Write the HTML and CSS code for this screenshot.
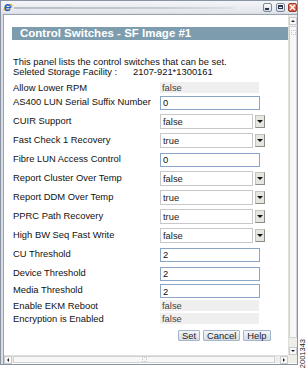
FILE: index.html
```html
<!DOCTYPE html>
<html lang="en">
<head>
    <meta charset="UTF-8">
    <title>Control Switches - SF Image #1</title>
    <link rel="stylesheet" href="styles.css">
</head>
<body>
    <div class="shot">
        <!-- Browser popup window -->
        <div class="window">
            <div class="titlebar">
                <svg class="ie-icon" width="10" height="10" viewBox="0 0 10 10">
                    <ellipse cx="5" cy="5.5" rx="4.6" ry="1.8" fill="none" stroke="#e8a020" stroke-width="1" transform="rotate(-30 5 5.5)"/>
                    <path d="M2.2 5.6h5.2c0-1.7-1.1-2.9-2.6-2.9S2.2 3.9 2.2 5.6s1.1 2.9 2.6 2.9c1.1 0 1.9-.5 2.3-1.3" fill="none" stroke="#1d62c8" stroke-width="1.4"/>
                </svg>
                <span class="title-blur"></span>
                <span class="win-btn win-min"></span>
                <span class="win-btn win-max"></span>
                <span class="win-btn win-close">
                    <svg width="7" height="7" viewBox="0 0 7 7"><path d="M1 1l5 5M6 1L1 6" stroke="#fff" stroke-width="1.4"/></svg>
                </span>
            </div>

            <div class="frame">
                <div class="client">
                    <div class="viewport">
                        <div class="panel">
                            <h1 class="panel-title">Control Switches - SF Image #1</h1>
                            <p class="intro">This panel lists the control switches that can be set.</p>
                            <p class="facility"><span class="facility-label">Seleted Storage Facility :</span><span>2107-921*1300161</span></p>

                            <div class="row row-ro row-first">
                                <span class="label">Allow Lower RPM</span>
                                <span class="readonly">false</span>
                            </div>
                            <div class="row">
                                <span class="label">AS400 LUN Serial Suffix Number</span>
                                <input class="field" type="text" value="0">
                            </div>
                            <div class="row">
                                <span class="label">CUIR Support</span>
                                <span class="combo"><span class="combo-field">false</span><span class="combo-btn"></span></span>
                            </div>
                            <div class="row">
                                <span class="label">Fast Check 1 Recovery</span>
                                <span class="combo"><span class="combo-field">true</span><span class="combo-btn"></span></span>
                            </div>
                            <div class="row">
                                <span class="label">Fibre LUN Access Control</span>
                                <input class="field" type="text" value="0">
                            </div>
                            <div class="row">
                                <span class="label">Report Cluster Over Temp</span>
                                <span class="combo"><span class="combo-field">false</span><span class="combo-btn"></span></span>
                            </div>
                            <div class="row">
                                <span class="label">Report DDM Over Temp</span>
                                <span class="combo"><span class="combo-field">true</span><span class="combo-btn"></span></span>
                            </div>
                            <div class="row">
                                <span class="label">PPRC Path Recovery</span>
                                <span class="combo"><span class="combo-field">true</span><span class="combo-btn"></span></span>
                            </div>
                            <div class="row">
                                <span class="label">High BW Seq Fast Write</span>
                                <span class="combo"><span class="combo-field">false</span><span class="combo-btn"></span></span>
                            </div>
                            <div class="row">
                                <span class="label">CU Threshold</span>
                                <input class="field" type="text" value="2">
                            </div>
                            <div class="row">
                                <span class="label">Device Threshold</span>
                                <input class="field" type="text" value="2">
                            </div>
                            <div class="row row-last">
                                <span class="label">Media Threshold</span>
                                <input class="field" type="text" value="2">
                            </div>
                            <div class="row row-ro">
                                <span class="label">Enable EKM Reboot</span>
                                <span class="readonly">false</span>
                            </div>
                            <div class="row row-ro">
                                <span class="label">Encryption is Enabled</span>
                                <span class="readonly">false</span>
                            </div>

                            <div class="actions">
                                <button class="btn" type="button">Set</button>
                                <button class="btn" type="button">Cancel</button>
                                <button class="btn" type="button">Help</button>
                            </div>
                        </div>
                    </div>

                    <!-- Scrollbars -->
                    <div class="vscroll">
                        <span class="sb-arrow sb-up"></span>
                        <span class="sb-thumb"><span class="grip"></span></span>
                        <span class="sb-arrow sb-down"></span>
                    </div>
                    <div class="hscroll">
                        <span class="sb-arrow sb-left"></span>
                        <span class="sb-thumb"><span class="grip"></span></span>
                        <span class="sb-arrow sb-right"></span>
                    </div>
                    <div class="corner"></div>
                </div>
            </div>
        </div>

        <div class="fig-id">2001343</div>
    </div>
</body>
</html>
```

FILE: styles.css
```css
body {
    margin: 0;
    background: #fff;
    font-family: "Liberation Sans", Arial, sans-serif;
    font-size: 9.4px;
    color: #111;
}
.shot {
    display: flex;
    width: 307px;
    height: 369px;
}

/* Window chrome */
.window {
    width: 298px;
    height: 365px;
    box-sizing: border-box;
    border: 1px solid #8a93a3;
    background: #d9dde4;
    display: flex;
    flex-direction: column;
}
.titlebar {
    height: 12px;
    display: flex;
    align-items: center;
    background: linear-gradient(#f4f5f8, #e2e5eb);
}
.ie-icon {
    margin-left: 2px;
    flex: none;
}
.title-blur {
    width: 220px;
    height: 2px;
    margin-left: 1px;
    margin-top: 1px;
    background: linear-gradient(90deg, #b9bec8, #c9cdd4 70%, #dfe2e7);
}
.win-btn {
    width: 9px;
    height: 9px;
    box-sizing: border-box;
    border: 1px solid #7d8799;
    border-radius: 2px;
    background: linear-gradient(#fbfbfc, #d9dde5);
    position: relative;
    flex: none;
}
.win-min {
    margin-left: auto;
}
.win-min::after {
    content: "";
    position: absolute;
    left: 1px;
    bottom: 1px;
    width: 4px;
    height: 2px;
    background: #2a3548;
}
.win-max {
    margin-left: 4px;
}
.win-max::after {
    content: "";
    position: absolute;
    left: 1px;
    top: 1px;
    width: 5px;
    height: 4px;
    border: 1px solid #2a3548;
    border-top-width: 2px;
    box-sizing: border-box;
}
.win-close {
    margin-left: 3px;
    border-color: #9b3a2a;
    background: linear-gradient(#ee8a70, #d9452a);
    display: flex;
    align-items: center;
    justify-content: center;
}

.frame {
    flex: 1;
    padding: 1px 0 0 2px;
    display: flex;
}
.client {
    flex: 1;
    border-top: 1px solid #9aa2b0;
    border-left: 1px solid #9aa2b0;
    display: grid;
    grid-template-columns: 1fr 9px;
    grid-template-rows: 340px 8px;
    background: #fff;
}
.viewport {
    overflow: hidden;
    background: #fff;
}

/* Panel content */
.panel {
    padding-left: 8px;
    width: 300px;
}
.panel-title {
    margin: 12px 0 0;
    height: 13px;
    padding-left: 8px;
    background: #7d9cae;
    color: #fff;
    font-size: 11.5px;
    line-height: 13px;
    font-weight: bold;
    white-space: nowrap;
}
.intro,
.facility {
    margin: 0;
    padding-left: 1px;
    line-height: 10px;
    white-space: nowrap;
}
.intro {
    margin-top: 17px;
}
.facility-label {
    display: inline-block;
    width: 120px;
}
.row {
    height: 19px;
    display: flex;
    align-items: center;
}
.row-first {
    margin-top: 4px;
}
.row-ro {
    height: 13px;
}
.row-first.row-ro {
    height: 12px;
}
.row-last {
    height: 16px;
}
.label {
    width: 147px;
    padding-left: 1px;
    padding-bottom: 3px;
    white-space: nowrap;
    flex: none;
}
.row-ro .label {
    padding-bottom: 0;
}
.readonly {
    width: 99px;
    height: 11px;
    line-height: 11px;
    padding-left: 2px;
    box-sizing: border-box;
    background: #efefef;
    color: #444;
}
.field {
    width: 100px;
    height: 14px;
    box-sizing: border-box;
    margin: 0;
    padding: 0 2px;
    border: 1px solid #8aa6c4;
    font: inherit;
    color: #111;
    background: #fff;
    outline: none;
}
.combo {
    display: flex;
    align-items: center;
}
.combo-field {
    width: 93px;
    height: 15px;
    line-height: 13px;
    box-sizing: border-box;
    border: 1px solid #c8c8c8;
    padding-left: 2px;
    color: #222;
}
.combo-btn {
    width: 10px;
    height: 13px;
    margin-left: 2px;
    box-sizing: border-box;
    border: 1px solid #c4c4be;
    border-right-color: #8d8d88;
    border-bottom-color: #8d8d88;
    background: #e6e5e0;
    position: relative;
}
.combo-btn::after {
    content: "";
    position: absolute;
    left: 1px;
    top: 4px;
    border-left: 3px solid transparent;
    border-right: 3px solid transparent;
    border-top: 3px solid #111;
}
.actions {
    margin-top: 5px;
    padding-left: 166px;
    display: flex;
    gap: 3px;
}
.btn {
    height: 11px;
    margin: 0;
    padding: 0 3px;
    border: 1px solid #a7b6c6;
    border-radius: 1px;
    background: linear-gradient(#f3f6fa, #d5dde7);
    font: inherit;
    line-height: 9px;
    color: #222;
}

/* Scrollbars */
.vscroll {
    display: flex;
    flex-direction: column;
    background: #eeeee9;
    border-left: 1px solid #e0e0da;
    padding-top: 2px;
}
.hscroll {
    display: flex;
    background: #eeeee9;
    border-top: 1px solid #e0e0da;
}
.corner {
    background: #eeeee9;
}
.sb-arrow {
    flex: none;
    width: 8px;
    height: 8px;
    box-sizing: border-box;
    border: 1px solid #c9cbd0;
    background: #f8f8f8;
    position: relative;
}
.sb-arrow::after {
    content: "";
    position: absolute;
    left: 1px;
    top: 2px;
    border-left: 2px solid transparent;
    border-right: 2px solid transparent;
}
.sb-up::after {
    border-bottom: 2px solid #222;
}
.sb-down::after {
    border-top: 2px solid #222;
}
.sb-left::after {
    left: 2px;
    top: 1px;
    border: 2px solid transparent;
    border-left: 0;
    border-right: 2px solid #222;
}
.sb-right::after {
    left: 2px;
    top: 1px;
    border: 2px solid transparent;
    border-right: 0;
    border-left: 2px solid #222;
}
.vscroll .sb-thumb {
    flex: 1;
    margin: 1px 0 9px;
    width: 8px;
    box-sizing: border-box;
    border: 1px solid #cfd1d6;
    background: #f7f7f7;
    display: flex;
    align-items: center;
    justify-content: center;
}
.hscroll .sb-thumb {
    flex: 1;
    margin: 0 5px 0 1px;
    height: 7px;
    box-sizing: border-box;
    border: 1px solid #cfd1d6;
    background: #f7f7f7;
    display: flex;
    align-items: center;
    justify-content: center;
}
.grip {
    width: 3px;
    height: 3px;
    border: 1px dotted #c4c4c4;
}
.vscroll .grip {
    margin-bottom: 300px;
}

/* Figure number at the right edge */
.fig-id {
    align-self: flex-end;
    margin: 0 0 1px 1px;
    writing-mode: vertical-rl;
    transform: rotate(180deg);
    font-size: 7.5px;
    line-height: 8px;
    color: #222;
}
```
